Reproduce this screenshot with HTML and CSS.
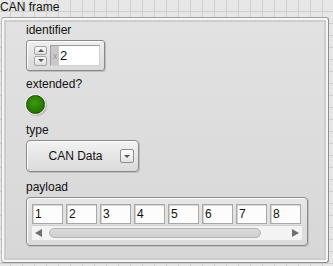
FILE: index.html
```html
<!DOCTYPE html>
<html lang="en">
<head>
    <meta charset="UTF-8">
    <title>CAN frame</title>
    <link rel="stylesheet" href="styles.css">
</head>
<body>
    <div class="title">CAN frame</div>
    <div class="frame">
        <div class="label">identifier</div>
        <div class="numeric">
            <div class="spinner">
                <div class="spin-btn"><span class="tri-up"></span></div>
                <div class="spin-btn"><span class="tri-down"></span></div>
            </div>
            <div class="num-field">
                <span class="radix">x</span>
                <span class="num-value">2</span>
            </div>
        </div>

        <div class="label label-extended">extended?</div>
        <div class="led"></div>

        <div class="label label-type">type</div>
        <div class="ring">
            <span class="ring-text">CAN Data</span>
            <span class="ring-btn"><span class="tri-down small"></span></span>
        </div>

        <div class="label label-payload">payload</div>
        <div class="array">
            <div class="cells">
                <div class="cell">1</div>
                <div class="cell">2</div>
                <div class="cell">3</div>
                <div class="cell">4</div>
                <div class="cell">5</div>
                <div class="cell">6</div>
                <div class="cell">7</div>
                <div class="cell">8</div>
            </div>
            <div class="scroll">
                <span class="arrow-left"></span>
                <span class="track"></span>
                <span class="arrow-right"></span>
            </div>
        </div>
    </div>
</body>
</html>
```

FILE: styles.css
```css
* {
    margin: 0;
    padding: 0;
    box-sizing: border-box;
    font-family: 'Liberation Sans', Arial, sans-serif;
}

body {
    width: 333px;
    height: 266px;
    overflow: hidden;
    color: #111;
    font-size: 12px;
    background-color: #e7e7e7;
    background-image:
        linear-gradient(to right, #cfcfcf 1px, transparent 1px),
        linear-gradient(to bottom, #cfcfcf 1px, transparent 1px);
    background-size: 12px 12px;
    background-position: 10px 11px;
}

.title {
    height: 17px;
    line-height: 14px;
    font-size: 12px;
    white-space: nowrap;
}

.frame {
    margin-left: 1px;
    width: 328px;
    height: 246px;
    padding: 5px 0 0 24px;
    border: 1px solid #8e8e8e;
    border-top-color: #a0a0a0;
    border-left-color: #bdbdbd;
    border-radius: 3px;
    background: linear-gradient(#e2e2e2, #d7d7d7);
    box-shadow: inset 0 0 0 2px #f6f6f6, inset 0 0 0 4px #cdcdcd;
    display: flex;
    flex-direction: column;
    align-items: flex-start;
}

.label {
    height: 14px;
    line-height: 14px;
}

.label-extended { margin-top: 6px; }
.label-type { margin-top: 9px; }
.label-payload { margin-top: 8px; }

/* numeric control */
.numeric {
    margin-top: 3px;
    width: 79px;
    height: 31px;
    border: 1px solid #8a8a8a;
    border-radius: 3px;
    background: linear-gradient(#efefef, #d9d9d9);
    box-shadow: inset 1px 1px 0 #fff, 1px 1px 0 #bdbdbd;
    display: flex;
    align-items: center;
    padding-left: 7px;
    gap: 3px;
}

.spinner {
    width: 13px;
    height: 20px;
    display: flex;
    flex-direction: column;
    gap: 1px;
}

.spin-btn {
    flex: 1;
    border: 1px solid #a4a4a4;
    border-radius: 2px;
    background: linear-gradient(#fafafa, #dedede);
    display: flex;
    align-items: center;
    justify-content: center;
}

.tri-up, .tri-down {
    width: 0;
    height: 0;
    border-left: 3px solid transparent;
    border-right: 3px solid transparent;
}

.tri-up { border-bottom: 3px solid #555; }
.tri-down { border-top: 3px solid #555; }

.num-field {
    width: 50px;
    height: 21px;
    background: #fff;
    border: 1px solid #9c9c9c;
    border-right-color: #d0d0d0;
    border-bottom-color: #d0d0d0;
    display: flex;
    align-items: stretch;
}

.radix {
    width: 8px;
    background: #c9c9c9;
    color: #9a9a9a;
    font-size: 9px;
    line-height: 20px;
    text-align: center;
}

.num-value {
    padding-left: 1px;
    font-size: 13px;
    line-height: 19px;
}

/* boolean LED */
.led {
    margin-top: 4px;
    width: 19px;
    height: 19px;
    border-radius: 50%;
    background: radial-gradient(circle at 45% 40%, #3c9c0c 0%, #2c8304 45%, #1b5e00 100%);
    border: 1px solid #1a4a05;
    box-shadow: 0 0 0 1px #f2f2f2, 1px 1px 1px 1px #b0b0b0;
}

/* ring / enum */
.ring {
    margin-top: 3px;
    width: 113px;
    height: 32px;
    border: 1px solid #8a8a8a;
    border-radius: 4px;
    background: linear-gradient(#f2f2f2, #dadada);
    box-shadow: inset 1px 1px 0 #fff, 1px 1px 0 #bdbdbd;
    display: flex;
    align-items: center;
    padding-right: 4px;
}

.ring-text {
    flex: 1;
    text-align: center;
    font-size: 12px;
    padding-left: 4px;
}

.ring-btn {
    width: 14px;
    height: 14px;
    border: 1px solid #8e8e8e;
    border-radius: 2px;
    background: linear-gradient(#ffffff, #e2e2e2);
    display: flex;
    align-items: center;
    justify-content: center;
}

/* array */
.array {
    margin-top: 3px;
    width: 282px;
    height: 49px;
    border: 1px solid #8a8a8a;
    border-radius: 4px;
    background: linear-gradient(#e6e6e6, #dadada);
    box-shadow: inset 1px 1px 0 #fff, 1px 1px 0 #bdbdbd;
    padding: 6px 0 0 5px;
}

.cells {
    display: flex;
    gap: 3px;
}

.cell {
    width: 31px;
    height: 20px;
    background: #fcfcfc;
    border: 1px solid #a8a8a8;
    box-shadow: inset 1px 1px 0 #d4d4d4;
    padding-left: 2px;
    line-height: 18px;
    font-size: 12px;
}

.scroll {
    margin-top: 1px;
    width: 270px;
    height: 15px;
    background: #f3f3f3;
    border-top: 1px solid #d0d0d0;
    display: flex;
    align-items: center;
    padding: 0 3px;
}

.arrow-left, .arrow-right {
    width: 0;
    height: 0;
    border-top: 4px solid transparent;
    border-bottom: 4px solid transparent;
}

.arrow-left {
    border-right: 7px solid #6e6e6e;
    margin-right: 7px;
}

.arrow-right {
    border-left: 7px solid #6e6e6e;
    margin-left: auto;
}

.track {
    width: 212px;
    height: 10px;
    border: 1px solid #b4b4b4;
    border-radius: 5px;
    background: linear-gradient(#dadada, #cfcfcf);
}
```
